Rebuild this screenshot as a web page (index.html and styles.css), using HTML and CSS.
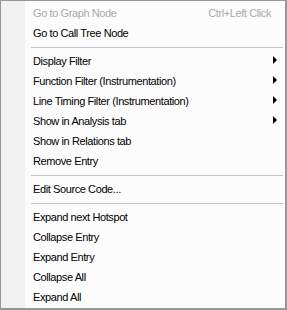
FILE: index.html
```html
<!DOCTYPE html>
<html lang="en">
<head>
  <meta charset="UTF-8">
  <title>Context menu</title>
  <link rel="stylesheet" href="styles.css">
</head>
<body>
  <div class="menu">
    <div class="item disabled"><span class="label">Go to Graph Node</span><span class="shortcut">Ctrl+Left Click</span></div>
    <div class="item"><span class="label">Go to Call Tree Node</span></div>
    <div class="sep"></div>
    <div class="item sub"><span class="label">Display Filter</span></div>
    <div class="item sub"><span class="label">Function Filter (Instrumentation)</span></div>
    <div class="item sub"><span class="label">Line Timing Filter (Instrumentation)</span></div>
    <div class="item sub"><span class="label">Show in Analysis tab</span></div>
    <div class="item"><span class="label">Show in Relations tab</span></div>
    <div class="item"><span class="label">Remove Entry</span></div>
    <div class="sep"></div>
    <div class="item"><span class="label">Edit Source Code...</span></div>
    <div class="sep"></div>
    <div class="item"><span class="label">Expand next Hotspot</span></div>
    <div class="item"><span class="label">Collapse Entry</span></div>
    <div class="item"><span class="label">Expand Entry</span></div>
    <div class="item"><span class="label">Collapse All</span></div>
    <div class="item"><span class="label">Expand All</span></div>
  </div>
</body>
</html>
```
FILE: styles.css
```css
body { margin: 0; background: #ffffff; font-family: "Liberation Sans", Arial, sans-serif; font-size: 11px; letter-spacing: -0.4px; }
.menu { box-sizing: border-box; width: 287px; height: 310px; border: 1px solid #979797; border-right-width: 2px; border-bottom-width: 2px; padding: 2px 0 1px 0; background: linear-gradient(to right, #f1f1f1 24px, #fcfcfc 24px); }
.item { display: flex; align-items: center; height: 20px; padding: 0 8px 0 32px; color: #000000; }
.item .label { flex: 1; }
.item.disabled { color: #a9a9ad; }
.shortcut { margin-right: 6px; }
.item.sub::after { content: ""; width: 0; height: 0; margin-top: -2px; border-top: 4px solid transparent; border-bottom: 4px solid transparent; border-left: 4px solid #000000; }
.sep { height: 8px; margin-left: 30px; margin-right: 2px; display: flex; align-items: center; }
.sep::before { content: ""; flex: 1; height: 1px; background: #c5c5c5; }
```
